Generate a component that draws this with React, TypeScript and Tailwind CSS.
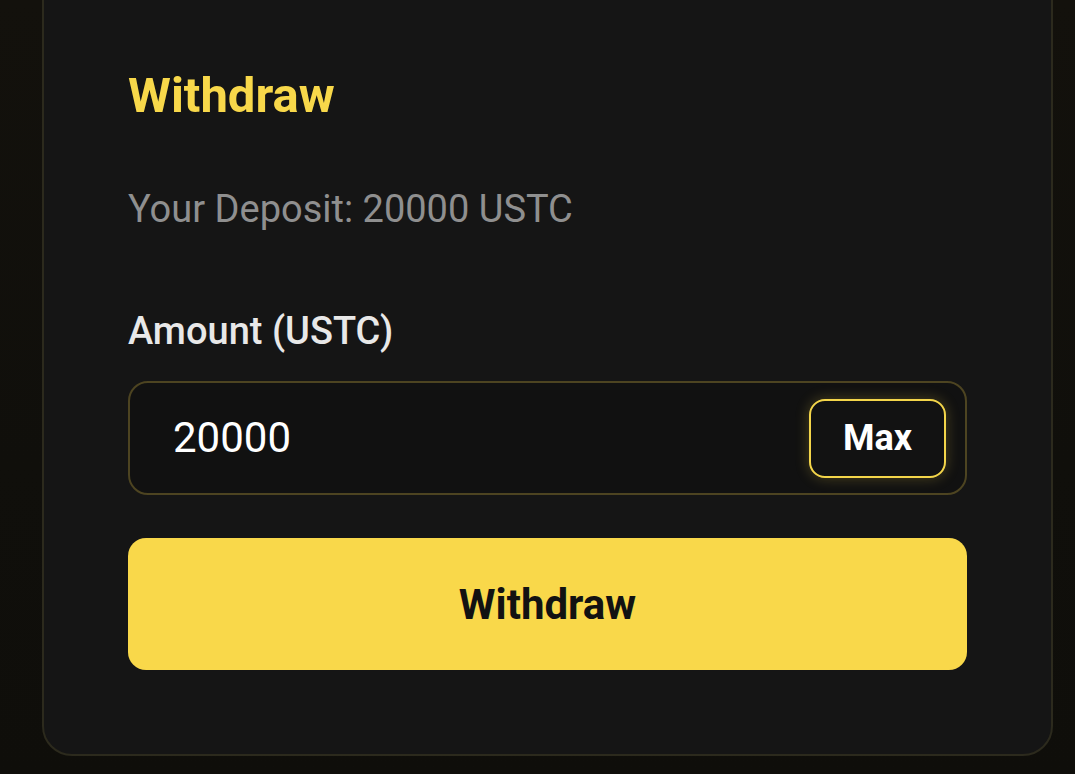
export default function App() {
  return (
    <div className="h-[774px] w-full overflow-hidden flex flex-col justify-end pl-[42px] pr-[22px] pb-[18px] bg-[linear-gradient(180deg,#13110c_0%,#100f0b_60%,#0f0e0a_100%)] font-['Roboto','Liberation_Sans',sans-serif]">
      <div className="rounded-[30px] border-2 border-[#2c2a1d] bg-[#151515] px-[84px] pt-[125px] pb-[84px]">
        <h2 className="text-[49px] font-bold leading-[56px] text-[#f8d84a]">Withdraw</h2>
        <p className="mt-[63px] text-[38px] leading-[44px] text-[#8f8f8f]">Your Deposit: 20000 USTC</p>
        <label className="mt-[78px] block text-[38px] font-medium leading-[44px] text-[#e8e8e8]">
          Amount (USTC)
        </label>
        <div className="mt-[28px] flex h-[114px] items-center rounded-[20px] border-2 border-[#4d4421] bg-[#111111] pl-[43px] pr-[19px]">
          <span className="flex-1 text-[42px] leading-none text-white">20000</span>
          <button className="flex h-[79px] w-[137px] items-center justify-center rounded-[16px] border-2 border-[#f3d54a] bg-[#121212] text-[36px] font-bold text-white shadow-[0_0_14px_rgba(248,216,74,0.25)]">
            Max
          </button>
        </div>
        <button className="mt-[43px] flex h-[132px] w-full items-center justify-center rounded-[18px] bg-[#f9d84a] text-[42px] font-bold text-[#121212]">
          Withdraw
        </button>
      </div>
    </div>
  );
}
